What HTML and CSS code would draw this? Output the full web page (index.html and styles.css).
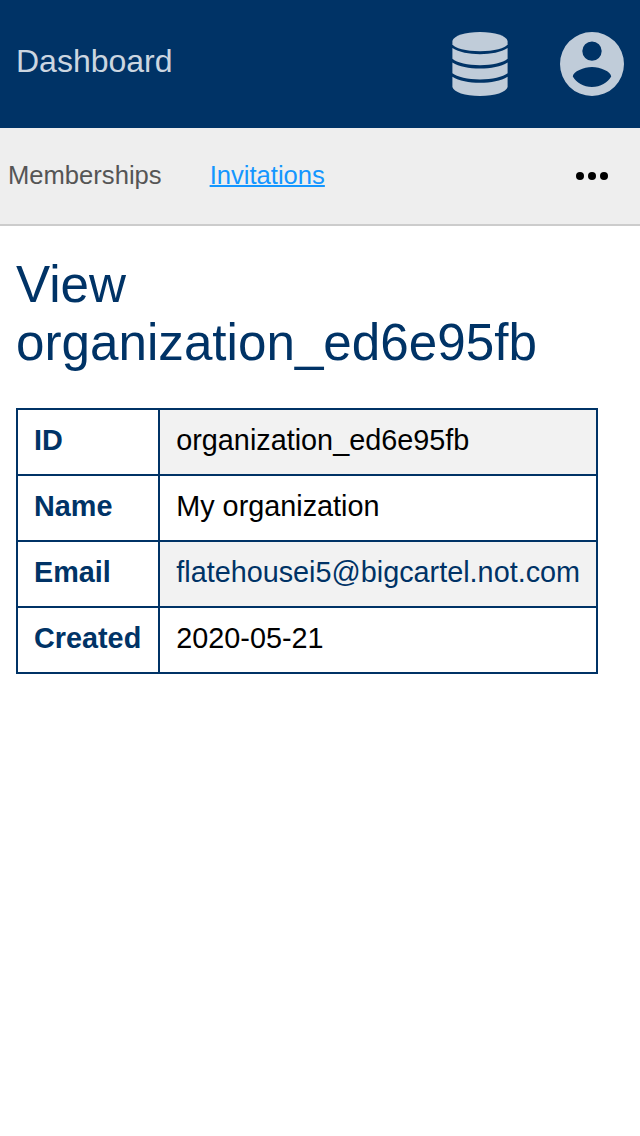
FILE: index.html
```html
<!DOCTYPE html>
<html lang="en">
<head>
<meta charset="utf-8">
<title>View organization</title>
<link rel="stylesheet" href="styles.css">
</head>
<body>
<header class="topbar">
  <a class="brand">Dashboard</a>
  <div class="actions">
    <svg class="icon-db" viewBox="0 0 56 64"><path d="M.4 9C1.500 3.800 13 0 28 0S54.500 3.800 55.600 9V12.200C53.500 16.200 42 19.200 28 19.200S2.500 16.200.4 12.200Z"/><path d="M.4 16C7 20.200 17 22.200 28 22.200S49 20.200 55.600 16V26.800C51 30.700 40 33.200 28 33.200S5 30.700.4 26.800Z"/><path d="M.4 30.500C7 34.600 17 36.600 28 36.600S49 34.600 55.600 30.500V41.300C51 45 40 47.400 28 47.400S5 45 .4 41.300Z"/><path d="M.4 44.700C7 48.800 17 50.800 28 50.800S49 48.800 55.600 44.700V55C54.500 60 43 64 28 64S1.500 60 .4 55Z"/></svg>
    <svg class="icon-user" viewBox="0 0 64 64"><path fill-rule="evenodd" d="M32 0a32 32 0 1 1 0 64a32 32 0 1 1 0-64ZM32 9.400a9.700 9.700 0 1 0 0 19.400a9.700 9.700 0 1 0 0-19.400ZM12.800 44.600C16.400 50.900 23.500 55 32 55S47.600 50.900 51.200 44.600C51.200 39.500 40 35 32 35S12.800 39.500 12.800 44.600Z"/></svg>
  </div>
</header>
<nav class="subnav">
  <a class="tab">Memberships</a>
  <a class="tab active">Invitations</a>
  <svg class="more" viewBox="0 0 32 8"><circle cx="4" cy="4" r="4"/><circle cx="16" cy="4" r="4"/><circle cx="28" cy="4" r="4"/></svg>
</nav>
<main class="content">
  <h1 class="title">View organization_ed6e95fb</h1>
  <table class="details">
    <tr><th>ID</th><td>organization_ed6e95fb</td></tr>
    <tr><th>Name</th><td>My organization</td></tr>
    <tr><th>Email</th><td><a class="mail">flatehousei5@bigcartel.not.com</a></td></tr>
    <tr><th>Created</th><td>2020-05-21</td></tr>
  </table>
</main>
</body>
</html>
```
FILE: styles.css
```css
* { box-sizing: border-box; }
body { margin: 0; background: #fff; color: #000; font-family: "Liberation Sans", Arial, sans-serif; }
.topbar { display: flex; justify-content: space-between; align-items: center; height: 128px; padding: 0 16px; background: #036; }
.brand { font-size: 32px; line-height: 36px; padding-bottom: 6px; color: #ccd6e0; }
.actions { display: flex; gap: 52px; align-items: center; }
.actions svg { height: 64px; fill: #c0ccd9; }
.icon-db { width: 56px; }
.icon-user { width: 64px; }
.subnav { display: flex; align-items: center; height: 98px; padding: 0 32px 2px 8px; background: #eee; border-bottom: 2px solid #ccc; font-size: 25.6px; }
.tab { color: #555; margin-right: 48px; }
.active { color: #1496ff; text-decoration: underline; text-decoration-thickness: 2px; }
.more { width: 32px; height: 8px; margin: 2px 0 0 auto; }
.content { padding: 30px 16px; }
.title { margin: 0 0 36px; color: #036; font-size: 51.2px; line-height: 58px; font-weight: 400; }
.details { border-collapse: collapse; font-size: 28.8px; line-height: 32px; }
.details th, .details td { border: 2px solid #036; padding: 14px 16px 18px; text-align: left; }
.details th { padding-right: 17px; color: #036; }
.details tr:nth-child(odd) td { background: #f2f2f2; }
.mail { color: #036; }
```
